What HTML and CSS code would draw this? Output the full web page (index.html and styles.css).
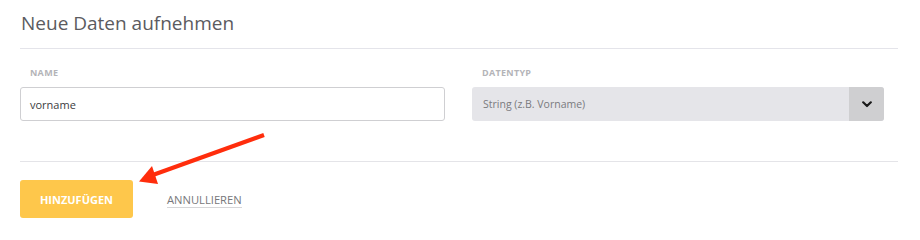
FILE: index.html
```html
<!DOCTYPE html>
<html lang="de">
<head>
<meta charset="utf-8">
<title>Neue Daten aufnehmen</title>
<link rel="stylesheet" href="styles.css">
</head>
<body>
<div class="panel">
  <h1 class="title">Neue Daten aufnehmen</h1>
  <div class="fields">
    <div class="field">
      <label class="label">NAME</label>
      <div class="input">vorname</div>
    </div>
    <div class="field">
      <label class="label">DATENTYP</label>
      <div class="select">
        <span class="select-text">String (z.B. Vorname)</span>
        <span class="select-btn">
          <svg width="10" height="7" viewBox="0 0 10 7"><polyline points="1.2,1.3 5,5 8.8,1.3" fill="none" stroke="#1a1a1a" stroke-width="2.2" stroke-linecap="round" stroke-linejoin="round"/></svg>
        </span>
      </div>
    </div>
  </div>
  <div class="actions">
    <button class="btn-primary">HINZUFÜGEN</button>
    <a class="btn-link">ANNULLIEREN</a>
  </div>
</div>
<svg class="arrow" width="920" height="236" viewBox="0 0 920 236">
  <line x1="264" y1="135" x2="150" y2="176" stroke="#ff2d0c" stroke-width="4.2" stroke-linecap="butt"/>
  <polygon points="139,181.5 152,166 158,184" fill="#ff2d0c"/>
</svg>
</body>
</html>
```

FILE: styles.css
```css
html, body {
  margin: 0;
  padding: 0;
  background: #ffffff;
}
body {
  font-family: "Open Sans", "Liberation Sans", sans-serif;
  width: 920px;
  height: 236px;
  overflow: hidden;
  position: relative;
}
.panel {
  padding: 0 22px 0 20px;
}
.title {
  margin: 0;
  padding: 9px 0 11px 1px;
  font-size: 19px;
  line-height: 28px;
  font-weight: 400;
  color: #5b5b60;
  border-bottom: 1px solid #e4e4ea;
}
.fields {
  display: grid;
  grid-template-columns: 425px 412px;
  column-gap: 27px;
  padding-top: 18px;
  padding-bottom: 40px;
  border-bottom: 1px solid #e4e4e8;
}
.label {
  display: block;
  margin: 0 0 8px 10px;
  font-size: 9px;
  line-height: 12px;
  font-weight: 700;
  letter-spacing: 0.3px;
  color: #b4b4b8;
}
.input {
  box-sizing: border-box;
  height: 34px;
  border: 1px solid #cfcfd2;
  border-radius: 3px;
  padding: 0 9px;
  display: flex;
  align-items: center;
  font-size: 11px;
  color: #3c3c40;
}
.select {
  box-sizing: border-box;
  height: 34px;
  border-radius: 3px;
  background: #e5e5e9;
  display: flex;
  align-items: stretch;
  overflow: hidden;
}
.select-text {
  flex: 1;
  display: flex;
  align-items: center;
  padding-left: 11px;
  font-size: 10.5px;
  color: #7a7a7e;
}
.select-btn {
  width: 35px;
  background: #cfcfd1;
  display: flex;
  align-items: center;
  justify-content: center;
}
.actions {
  display: flex;
  align-items: center;
  padding-top: 18px;
}
.btn-primary {
  box-sizing: border-box;
  width: 113px;
  height: 38px;
  border: none;
  border-radius: 3px;
  background: #fec74b;
  color: #ffffff;
  font-family: inherit;
  font-size: 11px;
  font-weight: 700;
  padding: 0;
}
.btn-link {
  margin-left: 34px;
  font-size: 11.2px;
  line-height: 13px;
  color: #77777a;
  border-bottom: 1px solid #d6d6d8;
  padding-bottom: 1px;
  margin-top: 2px;
}
.arrow {
  position: absolute;
  left: 0;
  top: 0;
  pointer-events: none;
}
```
